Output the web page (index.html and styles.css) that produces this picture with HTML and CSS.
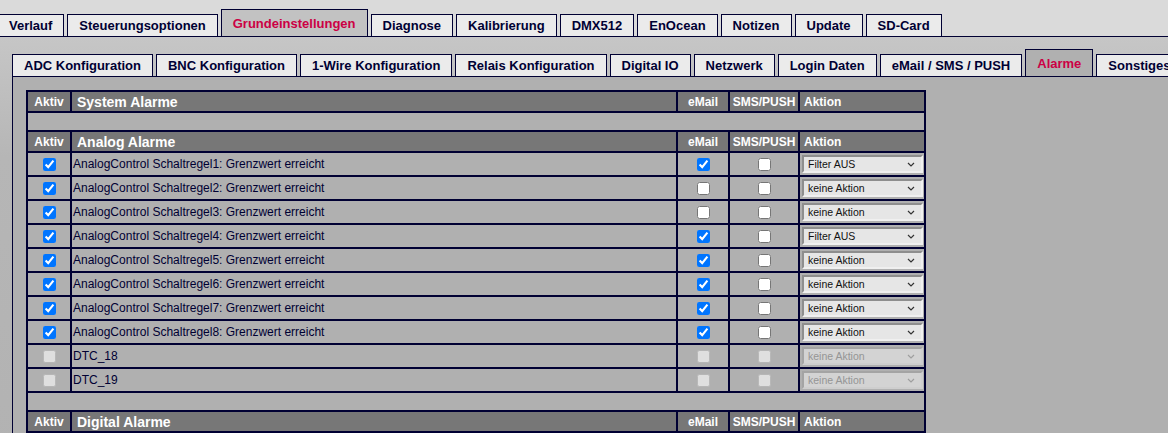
FILE: index.html
```html
<!DOCTYPE html>
<html lang="de">
<head>
  <meta charset="UTF-8">
  <title>Grundeinstellungen - Alarme</title>
  <meta name="viewport" content="width=device-width,initial-scale=1.0">
  <link rel="stylesheet" href="styles.css">
</head>
<body>
  <ul class="tabs main-tabs">
    <li><a href="#">Verlauf</a></li>
    <li><a href="#">Steuerungsoptionen</a></li>
    <li class="active"><a href="#">Grundeinstellungen</a></li>
    <li><a href="#">Diagnose</a></li>
    <li><a href="#">Kalibrierung</a></li>
    <li><a href="#">DMX512</a></li>
    <li><a href="#">EnOcean</a></li>
    <li><a href="#">Notizen</a></li>
    <li><a href="#">Update</a></li>
    <li><a href="#">SD-Card</a></li>
  </ul>
  <div class="main-panel">
    <ul class="tabs sub-tabs">
      <li><a href="#">ADC Konfiguration</a></li>
      <li><a href="#">BNC Konfiguration</a></li>
      <li><a href="#">1-Wire Konfiguration</a></li>
      <li><a href="#">Relais Konfiguration</a></li>
      <li><a href="#">Digital IO</a></li>
      <li><a href="#">Netzwerk</a></li>
      <li><a href="#">Login Daten</a></li>
      <li><a href="#">eMail / SMS / PUSH</a></li>
      <li class="active"><a href="#">Alarme</a></li>
      <li><a href="#">Sonstiges</a></li>
    </ul>
    <div class="sub-panel">
      <table class="alarms">
        <colgroup>
          <col class="c-aktiv"><col class="c-name"><col class="c-mail"><col class="c-push"><col class="c-aktion">
        </colgroup>
        <tr class="head">
          <th>Aktiv</th><th class="title">System Alarme</th><th>eMail</th><th>SMS/PUSH</th><th class="left">Aktion</th>
        </tr>
        <tr class="spacer"><td colspan="5"></td></tr>

        <tr class="head">
          <th>Aktiv</th><th class="title">Analog Alarme</th><th>eMail</th><th>SMS/PUSH</th><th class="left">Aktion</th>
        </tr>
        <tr>
          <td class="cb"><input type="checkbox" checked></td>
          <td class="name">AnalogControl Schaltregel1: Grenzwert erreicht</td>
          <td class="cb"><input type="checkbox" checked></td>
          <td class="cb"><input type="checkbox"></td>
          <td><select><option selected>Filter AUS</option><option>keine Aktion</option></select></td>
        </tr>
        <tr>
          <td class="cb"><input type="checkbox" checked></td>
          <td class="name">AnalogControl Schaltregel2: Grenzwert erreicht</td>
          <td class="cb"><input type="checkbox"></td>
          <td class="cb"><input type="checkbox"></td>
          <td><select><option>Filter AUS</option><option selected>keine Aktion</option></select></td>
        </tr>
        <tr>
          <td class="cb"><input type="checkbox" checked></td>
          <td class="name">AnalogControl Schaltregel3: Grenzwert erreicht</td>
          <td class="cb"><input type="checkbox"></td>
          <td class="cb"><input type="checkbox"></td>
          <td><select><option>Filter AUS</option><option selected>keine Aktion</option></select></td>
        </tr>
        <tr>
          <td class="cb"><input type="checkbox" checked></td>
          <td class="name">AnalogControl Schaltregel4: Grenzwert erreicht</td>
          <td class="cb"><input type="checkbox" checked></td>
          <td class="cb"><input type="checkbox"></td>
          <td><select><option selected>Filter AUS</option><option>keine Aktion</option></select></td>
        </tr>
        <tr>
          <td class="cb"><input type="checkbox" checked></td>
          <td class="name">AnalogControl Schaltregel5: Grenzwert erreicht</td>
          <td class="cb"><input type="checkbox" checked></td>
          <td class="cb"><input type="checkbox"></td>
          <td><select><option>Filter AUS</option><option selected>keine Aktion</option></select></td>
        </tr>
        <tr>
          <td class="cb"><input type="checkbox" checked></td>
          <td class="name">AnalogControl Schaltregel6: Grenzwert erreicht</td>
          <td class="cb"><input type="checkbox" checked></td>
          <td class="cb"><input type="checkbox"></td>
          <td><select><option>Filter AUS</option><option selected>keine Aktion</option></select></td>
        </tr>
        <tr>
          <td class="cb"><input type="checkbox" checked></td>
          <td class="name">AnalogControl Schaltregel7: Grenzwert erreicht</td>
          <td class="cb"><input type="checkbox" checked></td>
          <td class="cb"><input type="checkbox"></td>
          <td><select><option>Filter AUS</option><option selected>keine Aktion</option></select></td>
        </tr>
        <tr>
          <td class="cb"><input type="checkbox" checked></td>
          <td class="name">AnalogControl Schaltregel8: Grenzwert erreicht</td>
          <td class="cb"><input type="checkbox" checked></td>
          <td class="cb"><input type="checkbox"></td>
          <td><select><option>Filter AUS</option><option selected>keine Aktion</option></select></td>
        </tr>
        <tr>
          <td class="cb"><input type="checkbox" disabled></td>
          <td class="name">DTC_18</td>
          <td class="cb"><input type="checkbox" disabled></td>
          <td class="cb"><input type="checkbox" disabled></td>
          <td><select disabled><option>keine Aktion</option></select></td>
        </tr>
        <tr>
          <td class="cb"><input type="checkbox" disabled></td>
          <td class="name">DTC_19</td>
          <td class="cb"><input type="checkbox" disabled></td>
          <td class="cb"><input type="checkbox" disabled></td>
          <td><select disabled><option>keine Aktion</option></select></td>
        </tr>
        <tr class="spacer"><td colspan="5"></td></tr>

        <tr class="head">
          <th>Aktiv</th><th class="title">Digital Alarme</th><th>eMail</th><th>SMS/PUSH</th><th class="left">Aktion</th>
        </tr>
      </table>
    </div>
  </div>
</body>
</html>
```

FILE: styles.css
```css
html, body {margin:0; padding:0; height:100%; overflow:hidden; font-family:"Liberation Sans",Arial,sans-serif; background:#dadada; color:#000033;}

/* tab rows */
.tabs {list-style:none; margin:0; padding:0; display:flex; align-items:flex-end; gap:3px; white-space:nowrap;}
.tabs li {flex:none; height:21px; border:1px solid #000033; border-bottom:none; background:#ebebeb;}
.tabs li a {display:block; padding:0 11px; line-height:21px; font-size:13px; font-weight:bold; color:#000033; text-decoration:none;}
.tabs li.active {height:26px; background:#c2c2c2;}
.tabs li.active a {line-height:26px; padding-top:1px; color:#cc0044;}
.main-tabs {padding-top:9px; margin-left:-3px;}

/* panels */
.main-panel {border-top:1px solid #000033; padding:12px 0 0 12px; height:100%; background:linear-gradient(#c6c6c6, #b6b6b6 120px, #b2b2b2);}
.sub-tabs li.active {background:#b0b0b0;}
.sub-panel {border-top:1px solid #000033; border-left:1px solid #000033; background:#b0b0b0; padding:13px 0 0 13px; height:100%;}

/* alarm table */
.alarms {border-collapse:separate; border-spacing:2px; background:#000033; table-layout:fixed; width:900px;}
.c-aktiv {width:42px;}
.c-name {width:604px;}
.c-mail {width:50px;}
.c-push {width:68px;}
.c-aktion {width:124px;}
.alarms th {background:#777; color:#fff; font-size:12px; font-weight:bold; height:19px; padding:0; text-align:center;}
.alarms th.title {font-size:14px; text-align:left; padding-left:5px;}
.alarms th.left {text-align:left; padding-left:4px;}
.alarms td {background:#b0b0b0; height:22px; padding:0; font-size:12px;}
.alarms td.name {padding-left:1px;}
.alarms td.cb {text-align:center;}
.alarms td.cb input {margin:0; vertical-align:middle;}
.alarms .spacer td {height:17px;}

/* action dropdown with a thin chevron instead of the native arrow */
.alarms select {display:block; appearance:none; -webkit-appearance:none; width:121px; height:18px; margin:0 0 0 2px; padding:0 16px 0 4px; font-family:"Liberation Sans",Arial,sans-serif; font-size:10.5px; color:#111; border:2px solid; border-color:#8e8e8e #f0f0f0 #f0f0f0 #8e8e8e; border-radius:0; outline:none;
  background:#e6e6e6 url("data:image/svg+xml,%3Csvg xmlns='http://www.w3.org/2000/svg' width='8' height='5'%3E%3Cpath d='M1 1l3 3 3-3' fill='none' stroke='%23333' stroke-width='1.2'/%3E%3C/svg%3E") no-repeat right 6px center;}
.alarms select:disabled {color:#8a8a8a; border-color:#a0a0a0 #dcdcdc #dcdcdc #a0a0a0;
  background:#e2e2e2 url("data:image/svg+xml,%3Csvg xmlns='http://www.w3.org/2000/svg' width='8' height='5'%3E%3Cpath d='M1 1l3 3 3-3' fill='none' stroke='%23999' stroke-width='1.2'/%3E%3C/svg%3E") no-repeat right 6px center;}
```
